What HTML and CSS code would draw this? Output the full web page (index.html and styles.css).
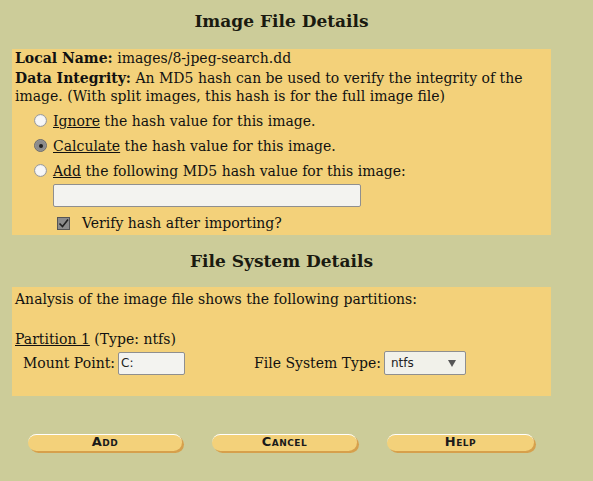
FILE: index.html
```html
<!DOCTYPE html>
<html>
<head>
<meta charset="utf-8">
<link rel="stylesheet" href="styles.css">
</head>
<body>
<div class="page">
  <h3 class="title">Image File Details</h3>
  <div class="box box-image">
    <div class="line"><b>Local Name:</b> images/8-jpeg-search.dd</div>
    <div class="line para"><b>Data Integrity:</b> An MD5 hash can be used to verify the integrity of the image. (With split images, this hash is for the full image file)</div>
    <div class="opts">
      <label class="opt"><span class="radio"></span><span><u>Ignore</u> the hash value for this image.</span></label>
      <label class="opt"><span class="radio on"></span><span><u>Calculate</u> the hash value for this image.</span></label>
      <label class="opt"><span class="radio"></span><span><u>Add</u> the following MD5 hash value for this image:</span></label>
      <div class="hashrow"><span class="textbox hash"></span></div>
      <label class="verify"><span class="check"><svg width="11" height="11" viewBox="0 0 11 11"><path d="M1.5 5.5 L4.5 8.5 L10 1.5" fill="none" stroke="#222" stroke-width="1.6"/></svg></span><span>Verify hash after importing?</span></label>
    </div>
  </div>

  <h3 class="title title2">File System Details</h3>
  <div class="box box-fs">
    <div class="line">Analysis of the image file shows the following partitions:</div>
    <div class="line part"><u>Partition 1</u> (Type: ntfs)</div>
    <div class="mountrow">
      <span class="mlabel">Mount Point:</span>
      <span class="textbox mount">C:</span>
      <span class="flabel">File System Type:</span>
      <span class="select">ntfs<span class="arrow"></span></span>
    </div>
  </div>

  <div class="buttons">
    <span class="btn btn-add">Add</span>
    <span class="btn btn-cancel">Cancel</span>
    <span class="btn btn-help">Help</span>
  </div>
</div>
</body>
</html>
```
FILE: styles.css
```css
html, body {
  margin: 0;
  padding: 0;
  background: #cccc99;
  width: 593px;
  height: 481px;
  overflow: hidden;
}
body {
  font-family: "DejaVu Serif", serif;
  font-size: 14px;
  color: #111;
}
.page {
  padding: 0 0 0 12px;
  width: 539px;
}
.title {
  margin: 0;
  padding-top: 11px;
  height: 48px;
  box-sizing: border-box;
  text-align: center;
  font-size: 17px;
  font-weight: bold;
  line-height: 20px;
  color: #1a1a10;
}
.title2 {
  padding-top: 16px;
  height: 52px;
}
.box {
  background: #f3d17a;
  padding: 0 3px 0 3px;
  box-sizing: border-box;
}
.box-image { height: 186px; }
.box-fs { height: 109px; padding-top: 2px; }
.line {
  line-height: 18px;
  margin-top: 1px;
}
.para { margin-top: 2px; }
.opts {
  padding-left: 20px;
  margin-top: 3px;
}
.opt {
  display: flex;
  align-items: center;
  height: 25px;
  gap: 6px;
}
.radio {
  width: 13px;
  height: 13px;
  border-radius: 50%;
  background: #f7f7f7;
  border: 1px solid #9a9a9a;
  box-sizing: border-box;
  position: relative;
  box-shadow: inset 0 0 1px #bbb;
  margin-left: -1px;
}
.radio.on {
  background: #8c8c8c;
  border-color: #6e6e6e;
}
.radio.on::after {
  content: "";
  position: absolute;
  left: 3.5px;
  top: 3.5px;
  width: 4px;
  height: 4px;
  border-radius: 50%;
  background: #222;
}
.hashrow {
  padding-left: 18px;
  margin-top: 1px;
}
.textbox {
  display: inline-block;
  box-sizing: border-box;
  background: #f3f3f0;
  border: 1px solid #8f8f8f;
  border-radius: 2px;
  height: 23px;
  vertical-align: middle;
}
.hash { width: 308px; }
.verify {
  display: flex;
  align-items: center;
  gap: 12px;
  padding-left: 22px;
  margin-top: 2px;
  height: 28px;
}
.check {
  width: 13px;
  height: 13px;
  box-sizing: border-box;
  border: 1px solid #555;
  background: #8c8c8c;
  display: flex;
  align-items: center;
  justify-content: center;
}
.part {
  margin-top: 22px;
}
.mountrow {
  display: flex;
  align-items: center;
  height: 24px;
  margin-top: 3px;
  padding-left: 8px;
}
.mlabel { margin-right: 3px; }
.mount {
  width: 67px;
  font-family: "DejaVu Sans", sans-serif;
  font-size: 12px;
  line-height: 21px;
  padding-left: 2px;
  color: #222;
}
.flabel { margin-left: 69px; margin-right: 3px; }
.select {
  position: relative;
  display: inline-block;
  box-sizing: border-box;
  width: 82px;
  height: 24px;
  border: 1px solid #8f8f8f;
  border-radius: 2px;
  background: #f1f1ea;
  font-family: "DejaVu Sans", sans-serif;
  font-size: 12px;
  line-height: 22px;
  padding-left: 6px;
  color: #222;
}
.arrow {
  position: absolute;
  right: 9px;
  top: 8px;
  width: 0;
  height: 0;
  border-left: 4px solid transparent;
  border-right: 4px solid transparent;
  border-top: 7px solid #555;
}
.buttons {
  display: flex;
  margin-top: 38px;
  padding-left: 16px;
}
.btn {
  display: block;
  box-sizing: border-box;
  height: 17px;
  border-radius: 9px;
  background: #f3d17a;
  border-top: 1px solid #fff;
  box-shadow: 2px 2px 0 #d6a04c;
  text-align: center;
  font-family: "DejaVu Sans", sans-serif;
  font-weight: bold;
  font-variant: small-caps;
  text-transform: lowercase;
  font-size: 13px;
  line-height: 14px;
  color: #1a1a1a;
  letter-spacing: 0.5px;
}
.btn::first-letter { text-transform: uppercase; }
.btn-add { width: 154px; }
.btn-cancel { width: 145px; margin-left: 30px; }
.btn-help { width: 147px; margin-left: 30px; }
```
